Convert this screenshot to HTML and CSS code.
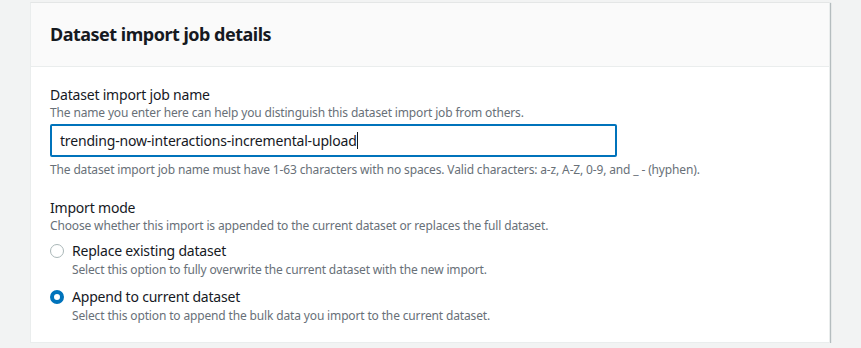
FILE: index.html
```html
<!DOCTYPE html>
<html lang="en">
<head>
    <meta charset="UTF-8">
    <title>Dataset import job details</title>
    <link rel="stylesheet" href="styles.css">
</head>
<body>
    <div class="card">
        <div class="header">
            <h2>Dataset import job details</h2>
        </div>

        <div class="content">
            <div class="field">
                <div class="label">Dataset import job name</div>
                <div class="desc">The name you enter here can help you distinguish this dataset import job from others.</div>
                <div class="input">trending-now-interactions-incremental-upload<span class="caret"></span></div>
                <div class="constraint">The dataset import job name must have 1-63 characters with no spaces. Valid characters: a-z, A-Z, 0-9, and _ - (hyphen).</div>
            </div>

            <div class="field mode">
                <div class="label">Import mode</div>
                <div class="desc">Choose whether this import is appended to the current dataset or replaces the full dataset.</div>

                <div class="radio">
                    <span class="dot"></span>
                    <div>
                        <div class="radio-label">Replace existing dataset</div>
                        <div class="desc">Select this option to fully overwrite the current dataset with the new import.</div>
                    </div>
                </div>

                <div class="radio">
                    <span class="dot checked"></span>
                    <div>
                        <div class="radio-label">Append to current dataset</div>
                        <div class="desc">Select this option to append the bulk data you import to the current dataset.</div>
                    </div>
                </div>
            </div>
        </div>
    </div>
</body>
</html>
```

FILE: styles.css
```css
* {
    margin: 0;
    padding: 0;
    box-sizing: border-box;
}

body {
    font-family: 'Noto Sans', 'Open Sans', sans-serif;
    background: #f2f3f3;
    color: #16191f;
    padding: 2px 30px 0;
}

.card {
    width: 800px;
    background: #ffffff;
    border: 1px solid #eaeded;
    border-top-color: #e4e6e6;
    box-shadow: 1px 1px 1px 0 rgba(0, 28, 36, 0.25);
}

.header {
    background: #fafafa;
    border-bottom: 1px solid #eaeded;
    height: 64px;
    padding: 0 19px 2px;
    display: flex;
    align-items: center;
}

.header h2 {
    font-size: 18px;
    font-weight: 700;
    line-height: 22px;
    letter-spacing: -0.5px;
}

.content {
    padding: 18px 19px 18px;
}

.label {
    font-size: 14px;
    line-height: 20px;
    letter-spacing: -0.2px;
}

.desc {
    font-size: 12px;
    line-height: 16px;
    color: #687078;
    letter-spacing: -0.15px;
}

.input {
    margin-top: 3px;
    width: 567px;
    height: 33px;
    border: 2px solid #0073bb;
    border-radius: 2px;
    padding: 0 8px;
    font-size: 14px;
    letter-spacing: -0.18px;
    display: flex;
    align-items: center;
}

.caret {
    display: inline-block;
    width: 1px;
    height: 17px;
    background: #16191f;
}

.constraint {
    margin-top: 5px;
    font-size: 12px;
    line-height: 16px;
    color: #687078;
    letter-spacing: -0.15px;
}

.mode {
    margin-top: 20px;
}

.radio {
    display: flex;
    gap: 8px;
    margin-top: 6px;
}

.radio + .radio {
    margin-top: 8px;
}

.dot {
    flex: none;
    width: 14px;
    height: 14px;
    margin-top: 4px;
    border-radius: 50%;
    border: 1px solid #aab7b8;
    background: #ffffff;
}

.dot.checked {
    border: 4px solid #0073bb;
}

.radio-label {
    font-size: 14px;
    line-height: 22px;
    letter-spacing: -0.2px;
}
```
